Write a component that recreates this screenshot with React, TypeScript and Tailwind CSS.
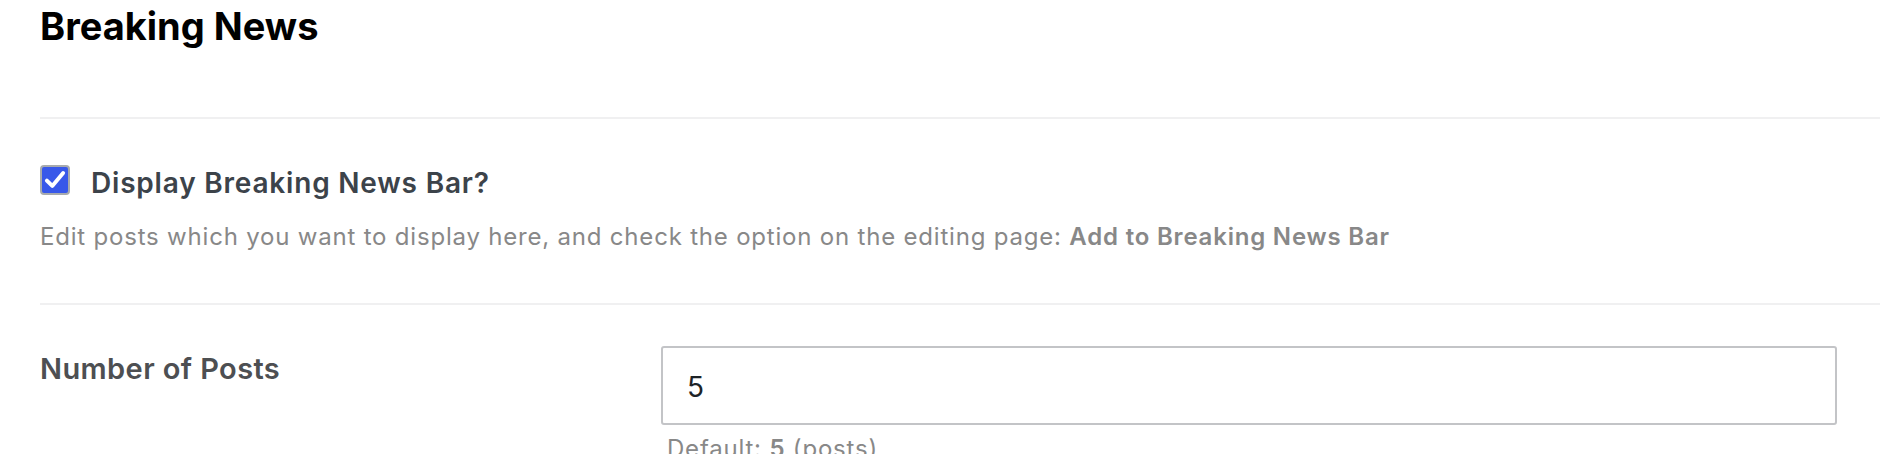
import React from 'react';

// Settings panel for the breaking news bar
const CheckBox: React.FC = () => (
  <span className="flex h-[30px] w-[30px] shrink-0 items-center justify-center rounded-[4px] border-2 border-[#a7aaad] bg-[#3858e9]">
    <svg viewBox="0 0 24 24" className="h-[26px] w-[26px]" fill="none" stroke="#ffffff" strokeWidth={3.6} strokeLinecap="round" strokeLinejoin="round">
      <path d="M4.5 12.5l5 5L19.5 5.5" />
    </svg>
  </span>
);

export default function App() {
  return (
    <div className="min-h-[454px] bg-white pl-10 pr-6 font-['Inter','Liberation_Sans',sans-serif]">
      <h1 className="pt-[7px] text-[38px] font-bold leading-[38px] text-black">Breaking News</h1>

      <div className="mt-[72px] h-[2px] bg-[#f0f0f1]" />

      {/* display toggle */}
      <div className="mt-[46px] flex items-start gap-[21px]">
        <CheckBox />
        <span className="mt-[3px] text-[28px] font-semibold leading-[30px] tracking-[0.8px] text-[#3c434a]">Display Breaking News Bar?</span>
      </div>
      <p className="mt-[23px] text-[24px] leading-[32px] tracking-[0.8px] text-[#888888]">
        Edit posts which you want to display here, and check the option on the editing page:{' '}
        <strong className="font-semibold">Add to Breaking News Bar</strong>
      </p>

      <div className="mt-[50px] h-[2px] bg-[#f0f0f1]" />

      {/* number of posts */}
      <div className="mt-[41px] flex">
        <div className="w-[621px] shrink-0 pt-[8px] text-[29px] font-semibold leading-[30px] tracking-[0.4px] text-[#4d4f52]">Number of Posts</div>
        <div className="flex flex-col">
          <div className="flex h-[79px] w-[1176px] items-center rounded-[3px] border-2 border-[#c3c4c7] px-[24px] pt-[2px] text-[28px] text-[#1d2327]">
            5
          </div>
          <p className="mt-[8px] pl-[6px] text-[24px] leading-[32px] tracking-[0.8px] text-[#888888]">
            Default: <strong className="font-semibold">5</strong> (posts)
          </p>
        </div>
      </div>
    </div>
  );
}
